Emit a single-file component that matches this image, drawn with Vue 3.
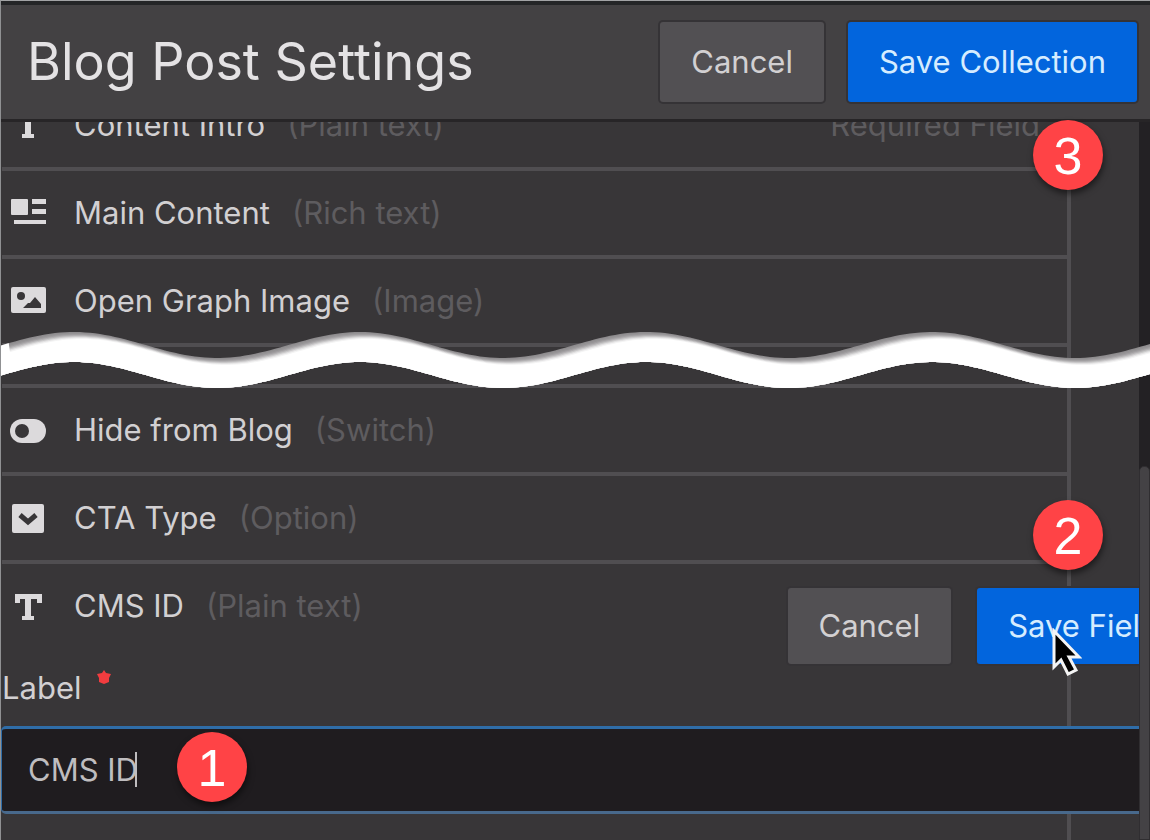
<script setup>
import { ref } from 'vue'

const upperFields = [
  { name: 'Main Content', type: 'Rich text', icon: 'rich' },
  { name: 'Open Graph Image', type: 'Image', icon: 'image' }
]
const lowerFields = [
  { name: 'Hide from Blog', type: 'Switch', icon: 'switch' },
  { name: 'CTA Type', type: 'Option', icon: 'option' }
]
const label = ref('CMS ID')

// Wavy band that marks the rows left out of the list
const edge = (from, to, step, base) => {
  const pts = []
  for (let x = from; step > 0 ? x <= to : x >= to; x += step) {
    pts.push(`${x} ${(base - 13 * Math.cos((2 * Math.PI * (x - 74)) / 286)).toFixed(2)}`)
  }
  return pts.join(' L')
}
const band = `M${edge(0, 1150, 5, 15)} L${edge(1150, 0, -5, 45)} Z`
const shade = `M${edge(-20, 1160, 5, 15)} L1160 90 L-20 90 Z`
const steps = [
  { x: 1, y: 1, c: '#959395' },
  { x: 3, y: 2, c: '#a09ea0' },
  { x: 4, y: 3, c: '#b2b0b2' },
  { x: 5, y: 4, c: '#c9c8c9' },
  { x: 6, y: 5, c: '#e2e1e2' },
  { x: 7, y: 6, c: '#f4f4f4' },
  { x: 8, y: 7, c: '#ffffff' }
]
</script>

<template>
  <div class="window">
    <header class="header">
      <h1>Blog Post Settings</h1>
      <div class="header-actions">
        <button type="button" class="btn">Cancel</button>
        <button type="button" class="btn primary">Save Collection</button>
      </div>
      <span class="badge badge-save">3</span>
    </header>

    <div class="body">
      <main class="panel">
        <ul class="fields">
          <li class="field partial">
            <div class="field-line">
              <svg class="icon" viewBox="0 0 36 36" aria-hidden="true">
                <path d="M5 5H32V14H27V10H21V27H24V31H12V27H15V10H10V14H5Z" />
              </svg>
              <span class="name">Content Intro</span>
              <span class="type">(Plain text)</span>
              <span class="required">Required Field</span>
            </div>
          </li>
          <li v-for="f in upperFields" :key="f.name" class="field">
            <svg v-if="f.icon === 'rich'" class="icon" viewBox="0 0 36 36" aria-hidden="true">
              <rect x="1" y="4" width="17" height="16" rx="1" />
              <rect x="22" y="4" width="14" height="5" />
              <rect x="22" y="14" width="14" height="5" />
              <rect x="4" y="25" width="32" height="4" />
            </svg>
            <svg v-else class="icon" viewBox="0 0 36 36" aria-hidden="true">
              <rect x="1" y="4" width="35" height="26" rx="2" />
              <circle class="hole" cx="11" cy="13" r="4" />
              <path class="hole" d="M13 25L18 20L20 20L25 14L31 21V25Z" />
            </svg>
            <span class="name">{{ f.name }}</span>
            <span class="type">({{ f.type }})</span>
          </li>
          <li class="field gap" aria-hidden="true"></li>
          <li v-for="f in lowerFields" :key="f.name" class="field">
            <svg v-if="f.icon === 'switch'" class="icon" viewBox="0 0 36 36" aria-hidden="true">
              <rect x="0" y="7" width="36" height="24" rx="12" />
              <circle class="hole" cx="12" cy="19" r="7" />
            </svg>
            <svg v-else class="icon" viewBox="0 0 36 36" aria-hidden="true">
              <rect x="2" y="4" width="32" height="29" rx="2" />
              <path class="tick" d="M10 15L18 22L26 15" />
            </svg>
            <span class="name">{{ f.name }}</span>
            <span class="type">({{ f.type }})</span>
          </li>
        </ul>

        <form class="editor" @submit.prevent>
          <div class="editor-head">
            <div class="field-line">
              <svg class="icon" viewBox="0 0 36 36" aria-hidden="true">
                <path d="M5 6H32V15H27V11H21V28H24V32H12V28H15V11H10V15H5Z" />
              </svg>
              <span class="name">CMS ID</span>
              <span class="type">(Plain text)</span>
            </div>
            <div class="editor-actions">
              <button type="button" class="btn">Cancel</button>
              <button type="submit" class="btn primary">Save Field</button>
              <svg class="pointer" viewBox="0 0 30 48" aria-hidden="true">
                <path d="M2 3V39L9 32L16 46L24 42L17 29H27Z" />
              </svg>
            </div>
            <span class="badge badge-field">2</span>
          </div>
          <label class="label" for="field-label">Label
            <svg class="star" viewBox="0 0 14 14" aria-hidden="true">
              <path d="M7 0L9 3L14 4L12 8L12 12L7 14L2 12L2 8L0 4L5 3Z" />
            </svg>
          </label>
          <div class="input-wrap">
            <input id="field-label" v-model="label" type="text" />
            <span class="caret"></span>
            <span class="badge badge-input">1</span>
          </div>
        </form>
      </main>
      <div class="track"><div class="thumb"></div></div>

      <svg class="wave" viewBox="0 0 1150 60" preserveAspectRatio="none" aria-hidden="true">
        <defs>
          <clipPath id="band"><path :d="band" /></clipPath>
        </defs>
        <g clip-path="url(#band)">
          <rect width="1150" height="60" fill="#8e8c8e" />
          <path
            v-for="s in steps"
            :key="s.y"
            :d="shade"
            :fill="s.c"
            :transform="`translate(${s.x} ${s.y})`"
          />
          <path d="M0 0H7L11 30H0Z" fill="#ffffff" />
        </g>
      </svg>
    </div>
  </div>
</template>

<style>
body {
  margin: 0;
  background: #383638;
}
</style>

<style scoped>
.window {
  box-sizing: border-box;
  min-height: 100vh;
  display: flex;
  flex-direction: column;
  border-top: 1px solid #a2a3a5;
  border-left: 1px solid #909193;
  background: #383638;
  color: #d2d0d2;
  font-family: Inter, "Liberation Sans", sans-serif;
  font-size: 31px;
  line-height: 36px;
  overflow: hidden;
}
.header {
  position: relative;
  z-index: 2;
  display: flex;
  align-items: center;
  justify-content: space-between;
  padding: 17px 13px 17px 26px;
  border-top: 4px solid #242527;
  border-bottom: 3px solid #272527;
  background: #434143;
}
h1 {
  margin: 0;
  font-size: 52px;
  line-height: 60px;
  font-weight: 400;
  color: #e4e2e4;
  white-space: nowrap;
}
.header-actions,
.editor-actions {
  display: flex;
  gap: 24px;
}
.btn {
  flex: none;
  box-sizing: border-box;
  height: 80px;
  padding: 0 31px;
  border: 0;
  border-radius: 3px;
  background: #525053;
  box-shadow: 0 0 0 2px #353336;
  color: #d2d0d2;
  font: inherit;
  white-space: nowrap;
}
.btn.primary {
  background: #0265dd;
  color: #d5ecff;
}
.body {
  position: relative;
  flex: 1;
  display: flex;
}
.panel {
  position: relative;
  flex: 1;
  min-width: 0;
  overflow: hidden;
}
.panel::before {
  content: "";
  position: absolute;
  top: 0;
  bottom: 0;
  right: 68px;
  width: 4px;
  background: #504e51;
}
.fields {
  margin: 0 68px 0 1px;
  padding: 0;
  list-style: none;
}
.field,
.field-line {
  box-sizing: border-box;
  display: flex;
  align-items: center;
  height: 88px;
}
.field {
  padding-left: 8px;
  border-bottom: 4px solid #504e51;
}
.field-line {
  flex: 1;
  height: 84px;
}
.partial {
  height: 49px;
  align-items: flex-end;
  overflow: hidden;
}
.gap {
  height: 41px;
}
.icon {
  flex: none;
  width: 36px;
  height: 36px;
  margin-right: 28px;
  fill: #dcdadc;
}
.hole {
  fill: #383638;
}
.tick {
  fill: none;
  stroke: #383638;
  stroke-width: 5;
}
.name {
  white-space: nowrap;
}
.type {
  margin-left: 22px;
  color: #5e5c5f;
  white-space: nowrap;
}
.required {
  margin-left: auto;
  margin-right: 31px;
  color: #5e5c5f;
}
.editor-head {
  position: relative;
  display: flex;
  justify-content: space-between;
  padding-left: 9px;
}
.editor-actions {
  position: relative;
  margin-top: 24px;
  margin-right: -51px;
  gap: 26px;
}
.editor-actions .btn {
  height: 76px;
}
.pointer {
  position: absolute;
  left: 264px;
  top: 40px;
  width: 30px;
  height: 48px;
  fill: #000000;
  stroke: #f4f4f4;
  stroke-width: 3;
}
.label {
  display: flex;
  margin: 6px 0 20px 1px;
}
.star {
  width: 14px;
  height: 14px;
  margin-left: 15px;
  fill: #f23c3f;
}
.input-wrap {
  position: relative;
}
input {
  display: block;
  box-sizing: border-box;
  width: 100%;
  height: 88px;
  padding: 0 26px 2px;
  border: 3px solid #2f6da8;
  border-right: 0;
  border-left-width: 1px;
  border-bottom-color: #48698c;
  border-radius: 5px 0 0 5px;
  outline: 0;
  background: #1f1c1f;
  color: #bfbdbf;
  font: inherit;
}
.caret {
  position: absolute;
  left: 134px;
  top: 26px;
  width: 2px;
  height: 35px;
  background: #bfbdbf;
}
.track {
  flex: none;
  box-sizing: border-box;
  display: flex;
  width: 11px;
  padding-top: 344px;
  background: #232124;
}
.thumb {
  flex: 1;
  box-sizing: border-box;
  border: 1px solid #302e31;
  border-radius: 5px 5px 0 0;
  background: #444245;
}
.wave {
  position: absolute;
  left: -1px;
  top: 208px;
  width: calc(100% + 1px);
  height: 60px;
}
.badge {
  position: absolute;
  z-index: 3;
  width: 70px;
  height: 70px;
  border-radius: 50%;
  background: #ff4346;
  box-shadow: 1px 4px 6px rgba(0, 0, 0, 0.5);
  color: #ffffff;
  font-family: "Liberation Sans", Arial, sans-serif;
  font-size: 52px;
  line-height: 72px;
  text-align: center;
}
.badge-save {
  right: 47px;
  top: 115px;
}
.badge-field {
  right: 36px;
  top: -64px;
}
.badge-input {
  left: 176px;
  top: 6px;
}
</style>
